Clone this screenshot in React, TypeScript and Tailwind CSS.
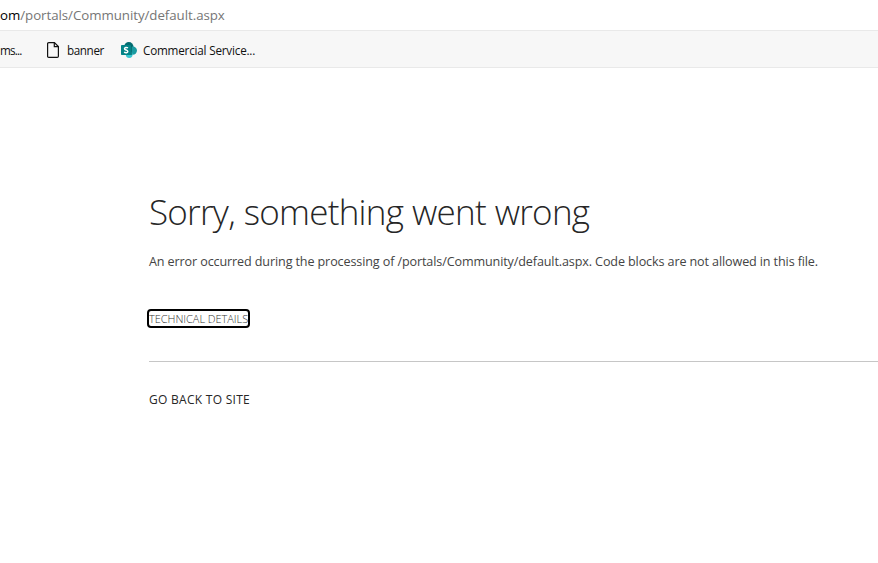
function PageIcon() {
  return (
    <svg className="ml-[25px] mt-[2px] h-[16px] w-[12px] shrink-0" viewBox="0 0 12 16" fill="none" stroke="#111" strokeWidth="1.2">
      <path d="M1.8.6H7.4L11.4 4.6V14.2Q11.4 15.4 10.2 15.4H1.8Q.6 15.4.6 14.2V1.8Q.6.6 1.8.6Z" />
      <path d="M7.3.8V4.7H11.2" />
    </svg>
  );
}

function SharePointIcon() {
  return (
    <svg className="ml-[17px] mt-[2px] h-[16px] w-[16px] shrink-0" viewBox="0 0 16 16">
      <circle cx="7.8" cy="4.7" r="4.7" fill="#036c70" />
      <circle cx="11.8" cy="8.6" r="4.2" fill="#1a9ba1" />
      <circle cx="8.2" cy="12.6" r="3.4" fill="#37c6d0" />
      <path d="M5 3.5h6v9.5H5z" fill="#025a5e" fillOpacity=".65" />
      <rect x="0" y="3" width="10" height="10" rx=".8" fill="#038387" />
      <path d="M7 5.9C5.8 5.1 3.5 5.2 3.5 6.7C3.5 8.3 6.8 7.8 6.8 9.4C6.8 10.9 4.5 11 3.1 10.2" fill="none" stroke="#fff" strokeWidth="1.5" />
    </svg>
  );
}

export default function App() {
  return (
    <div className="flex h-[563px] w-[878px] flex-col overflow-hidden whitespace-nowrap bg-white font-['Open_Sans',sans-serif] text-[#262626]">
      <header>
        <div className="flex h-[30px] items-center text-[13.3px] leading-[18px] tracking-[-0.05px]">
          <span className="text-black">om</span>
          <span className="text-[#767676]">/portals/Community/default.aspx</span>
        </div>
        <nav className="flex h-[38px] items-center border-y border-[#e9e9e9] bg-[#f7f7f7] text-[12px] leading-[16px] text-[#111]">
          <span className="w-[22px] pt-[2px] text-[11.7px] tracking-[-0.8px]">ms...</span>
          <PageIcon />
          <span className="ml-[8px] w-[37px] pt-[2px] text-[11.7px] tracking-[-0.4px]">banner</span>
          <SharePointIcon />
          <span className="ml-[6px] pt-[2px] text-[11.7px] tracking-[-0.2px]">Commercial Service...</span>
        </nav>
      </header>
      <main className="flex flex-col items-start pl-[149px] pt-[119px]">
        <h1 className="text-[35px] font-light leading-[50px] tracking-[-0.75px] [word-spacing:0.5px]">Sorry, something went wrong</h1>
        <p className="mt-[15px] text-[12.6px] leading-[20px] tracking-[-0.125px] text-[#444]">
          An error occurred during the processing of /portals/Community/default.aspx. Code blocks are not allowed in this file.
        </p>
        <button className="-ml-[2px] mt-[37px] flex h-[19px] w-[103px] items-center rounded-[4px] border-2 border-black text-[11px] font-light leading-[15px] tracking-[-0.04px] text-[#333]">
          <span>TECHNICAL DETAILS</span>
        </button>
        <hr className="mt-[33px] w-full border-[#c6c6c6]" />
        <a className="mt-[28px] text-[12px] leading-[20px] tracking-[0.28px]">GO BACK TO SITE</a>
      </main>
    </div>
  );
}
